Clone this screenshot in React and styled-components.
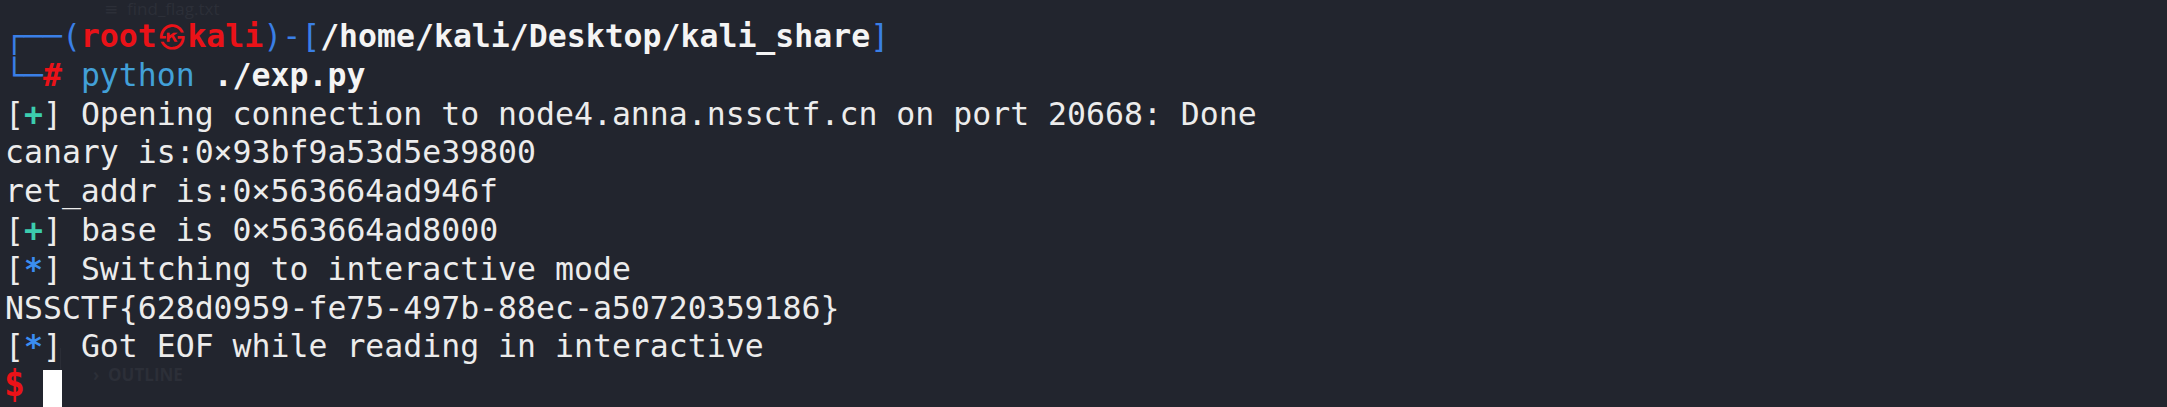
import React from "react";
import styled, { createGlobalStyle } from "styled-components";

const output = [
  { mark: "+", text: "Opening connection to node4.anna.nssctf.cn on port 20668: Done" },
  { text: "canary is:0×93bf9a53d5e39800" },
  { text: "ret_addr is:0×563664ad946f" },
  { mark: "+", text: "base is 0×563664ad8000" },
  { mark: "*", text: "Switching to interactive mode" },
  { text: "NSSCTF{628d0959-fe75-497b-88ec-a50720359186}" },
  { mark: "*", text: "Got EOF while reading in interactive" },
];

const App = () => {
  return (
    <>
      <GlobalStyle />
      <Terminal>
        <Ghost top="0px" left="104px">≡  find_flag.txt</Ghost>
        <GhostPanel />
        <Ghost top="366px" left="93px" bold>›  OUTLINE</Ghost>
        <Line>
          <Frame>┌──(</Frame>
          <User>root</User>
          <KaliMark>㉿</KaliMark>
          <User>kali</User>
          <Frame>)-[</Frame>
          <Path>/home/kali/Desktop/kali_share</Path>
          <Frame>]</Frame>
        </Line>
        <Line>
          <Frame>└─</Frame>
          <User>#</User> <Cmd>python</Cmd> <Path>./exp.py</Path>
        </Line>
        {output.map((row, i) => (
          <Line key={i}>
            {row.mark && (
              <>
                [<Mark kind={row.mark}>{row.mark}</Mark>]{" "}
              </>
            )}
            {row.text}
          </Line>
        ))}
        <Line>
          <Dollar>$</Dollar> <Cursor />
        </Line>
      </Terminal>
    </>
  );
};

/* Start Styling */
const GlobalStyle = createGlobalStyle`
  html, body {
    margin: 0;
    padding: 0;
    background: #22252e;
  }
`;
const Terminal = styled.div`
  position: relative;
  height: 407px;
  overflow: hidden;
  box-sizing: border-box;
  padding: 17px 0 0 5px;
  background: #22252e;
  color: #ececec;
  font-family: "DejaVu Sans Mono", "Liberation Mono", monospace;
  font-size: 31.5px;
  line-height: 38.8px;
  white-space: pre;
`;
const Line = styled.div`
  position: relative;
  height: 38.8px;
`;
const Frame = styled.span`
  color: #3a7fe6;
`;
const User = styled.span`
  color: #ea1218;
  font-weight: bold;
`;
const Dollar = styled(User)`
  display: inline-block;
  transform: scale(1.1, 1.2);
  transform-origin: 50% 80%;
`;
const KaliMark = styled.span`
  display: inline-block;
  width: 2ch;
  text-align: center;
  color: #ea1218;
  font-family: "Noto Sans CJK KR", "Noto Sans CJK SC", sans-serif;
  font-size: 26px;
  font-weight: bold;
`;
const Path = styled.span`
  color: #f4f4f4;
  font-weight: bold;
`;
const Cmd = styled.span`
  color: #42a0d8;
`;
const Mark = styled.span`
  color: ${({ kind }) => (kind === "+" ? "#3ccdae" : "#3a8df2")};
  font-weight: bold;
`;
const Cursor = styled.span`
  display: inline-block;
  width: 1ch;
  height: 40px;
  vertical-align: -14px;
  background: #ffffff;
`;
const Ghost = styled.div`
  position: absolute;
  top: ${({ top }) => top};
  left: ${({ left }) => left};
  font-family: "Open Sans", "DejaVu Sans", sans-serif;
  font-size: 17px;
  line-height: 17px;
  font-weight: ${({ bold }) => (bold ? 700 : 400)};
  color: #2c2f38;
  pointer-events: none;
`;
const GhostPanel = styled.div`
  position: absolute;
  left: 60px;
  top: 348px;
  bottom: 0;
  width: 1px;
  background: #2a2d36;
`;
/* End Styling */

export default App;
